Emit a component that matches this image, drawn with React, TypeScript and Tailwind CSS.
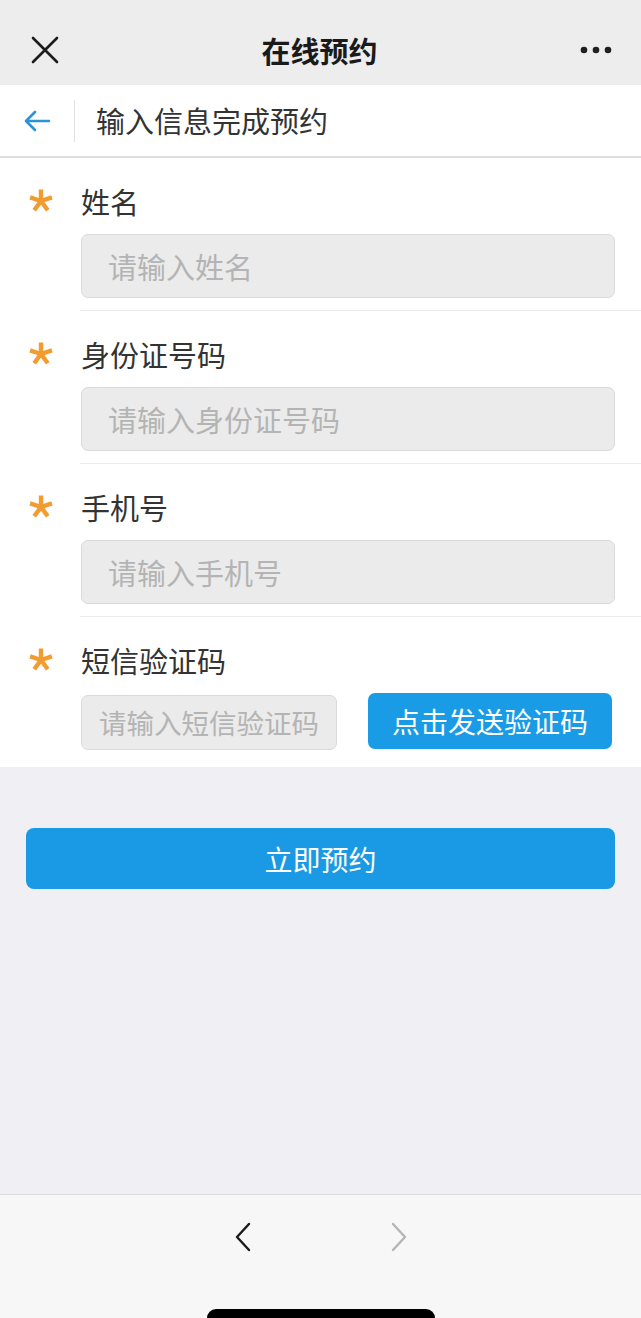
import React from "react";

const font = { fontFamily: '"Noto Sans CJK SC", "Noto Sans", sans-serif' };

function Star() {
  const cx = 14;
  const cy = 13;
  const r = 11.5;
  const angles = [-90, -18, 54, 126, 198];
  return (
    <svg width="28" height="26" viewBox="0 0 28 26">
      {angles.map((a) => {
        const rad = (a * Math.PI) / 180;
        return (
          <line
            key={a}
            x1={cx}
            y1={cy}
            x2={cx + r * Math.cos(rad)}
            y2={cy + r * Math.sin(rad)}
            stroke="#f29b2f"
            strokeWidth="4.4"
            strokeLinecap="butt"
          />
        );
      })}
    </svg>
  );
}

function Field({ label, placeholder, divider = true }: { label: string; placeholder: string; divider?: boolean }) {
  return (
    <div>
      <div className="pt-[25px] pb-[12px]">
        <div className="flex items-center h-[36px]">
          <div className="w-[81px] pl-[27px] flex items-center">
            <Star />
          </div>
          <span className="text-[29px] text-[#333333] leading-none">{label}</span>
        </div>
        <div className="pl-[81px] pr-[26px] mt-[15px]">
          <div className="h-[64px] rounded-[7px] bg-[#ebebeb] border border-[#dadada] flex items-center pl-[26px]">
            <span className="text-[29px] text-[#b4b4b4] leading-none">{placeholder}</span>
          </div>
        </div>
      </div>
      {divider && <div className="ml-[80px] h-px bg-[#ececec]" />}
    </div>
  );
}

export default function App() {
  return (
    <div className="w-[641px] h-[1318px] flex flex-col bg-[#efeff4] overflow-hidden" style={font}>
      {/* top bar */}
      <div className="h-[85px] bg-[#ededed] flex items-center justify-between px-[30px] pt-[15px]">
        <svg width="30" height="30" viewBox="0 0 30 30">
          <path d="M3 3 L27 27 M27 3 L3 27" stroke="#1c1c1c" strokeWidth="2.6" strokeLinecap="round" />
        </svg>
        <span className="text-[29px] font-semibold text-[#1a1a1a] leading-none">在线预约</span>
        <svg width="34" height="10" viewBox="0 0 34 10" className="mr-[-2px]">
          <circle cx="5" cy="5" r="3.3" fill="#1f1f1f" />
          <circle cx="17" cy="5" r="3.3" fill="#1f1f1f" />
          <circle cx="29" cy="5" r="3.3" fill="#1f1f1f" />
        </svg>
      </div>

      {/* sub header */}
      <div className="h-[73px] bg-white flex items-center border-b-[2px] border-[#dedede]">
        <div className="w-[74px] flex items-center pl-[23px]">
          <svg width="28" height="24" viewBox="0 0 28 24">
            <path d="M26 12 H3 M12 3 L3 12 L12 21" stroke="#2a93da" strokeWidth="2.6" fill="none" strokeLinecap="round" strokeLinejoin="round" />
          </svg>
        </div>
        <div className="w-px h-[42px] bg-[#e2e2e2]" />
        <span className="ml-[21px] text-[29px] text-[#333333] leading-none">输入信息完成预约</span>
      </div>

      {/* form */}
      <div className="bg-white">
        <Field label="姓名" placeholder="请输入姓名" />
        <Field label="身份证号码" placeholder="请输入身份证号码" />
        <Field label="手机号" placeholder="请输入手机号" />
        <div className="pt-[25px] pb-[17px]">
          <div className="flex items-center h-[36px]">
            <div className="w-[81px] pl-[27px] flex items-center">
              <Star />
            </div>
            <span className="text-[29px] text-[#333333] leading-none">短信验证码</span>
          </div>
          <div className="pl-[81px] pr-[29px] mt-[14px] flex items-center justify-between">
            <div className="w-[256px] h-[55px] mt-[3px] rounded-[7px] bg-[#ebebeb] border border-[#dadada] flex items-center pl-[17px]">
              <span className="text-[27.5px] text-[#b4b4b4] leading-none whitespace-nowrap">请输入短信验证码</span>
            </div>
            <div className="w-[244px] h-[56px] rounded-[7px] bg-[#1a9be6] flex items-center justify-center">
              <span className="text-[28px] text-white leading-none">点击发送验证码</span>
            </div>
          </div>
        </div>
      </div>

      {/* gray area */}
      <div className="flex-1 px-[26px] pt-[61px]">
        <div className="h-[61px] rounded-[8px] bg-[#1a9ae4] flex items-center justify-center">
          <span className="text-[28px] text-white leading-none">立即预约</span>
        </div>
      </div>

      {/* bottom toolbar */}
      <div className="h-[124px] bg-[#f7f7f7] border-t border-[#d9d9de] flex flex-col items-center">
        <div className="flex items-center justify-center gap-[136px] mt-[26px] h-[32px]">
          <svg width="20" height="32" viewBox="0 0 20 32">
            <path d="M16 3 L4 16 L16 29" stroke="#1a1a1a" strokeWidth="2.4" fill="none" strokeLinecap="round" strokeLinejoin="round" />
          </svg>
          <svg width="20" height="32" viewBox="0 0 20 32">
            <path d="M4 3 L16 16 L4 29" stroke="#b5b5b5" strokeWidth="2.4" fill="none" strokeLinecap="round" strokeLinejoin="round" />
          </svg>
        </div>
        <div className="flex-1" />
        <div className="w-[228px] h-[9px] rounded-t-full bg-black" />
      </div>
    </div>
  );
}
